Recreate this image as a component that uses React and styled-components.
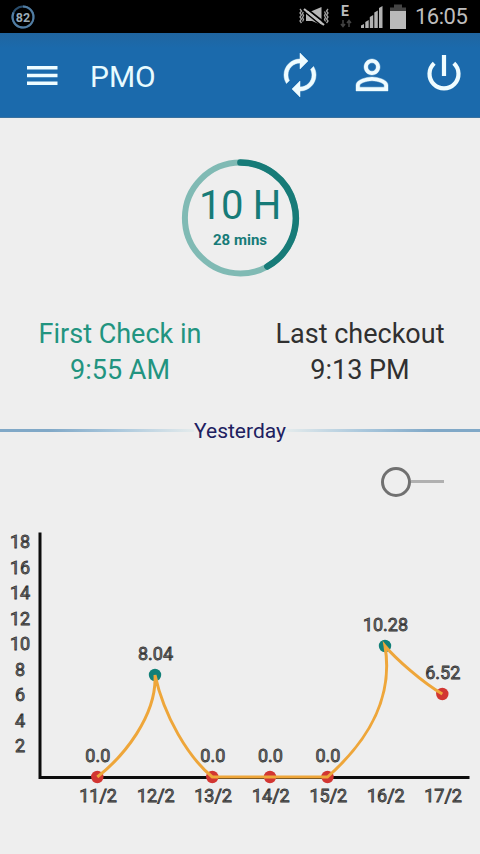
import React from 'react';
import styled, { createGlobalStyle } from 'styled-components';

const GlobalStyle = createGlobalStyle`
  body {
    margin: 0;
    background: #eeeeee;
    font-family: Roboto, 'Noto Sans', sans-serif;
  }
`;

const Screen = styled.div`
  display: flex;
  flex-direction: column;
  width: 480px;
  height: 854px;
  overflow: hidden;
  background: #eeeeee;
`;

const StatusBar = styled.div`
  display: flex;
  align-items: center;
  justify-content: space-between;
  box-sizing: border-box;
  height: 33px;
  padding: 0 12px 0 10px;
  background: #000;
`;

const StatusIcons = styled.div`
  display: flex;
  align-items: center;
`;

const Clock = styled.span`
  width: 53px;
  margin-left: 7px;
  color: #bebebe;
  font-size: 22px;
  line-height: 34px;
  letter-spacing: -0.5px;
  white-space: nowrap;
`;

const AppBar = styled.header`
  display: flex;
  align-items: center;
  box-sizing: border-box;
  height: 85px;
  padding: 0 12px 0 18px;
  background: linear-gradient(#2065a0, #1b6aac 18%, #1b6aac);
  border-bottom: 1px solid #39719f;
`;

const IconButton = styled.button`
  display: flex;
  width: 48px;
  height: 48px;
  margin: 0 0 0 ${(props) => props.$gap || 0}px;
  padding: 0;
  border: 0;
  background: none;
  color: #effcff;
`;

const Title = styled.h1`
  flex: 1;
  margin: 4px 0 0 24px;
  color: #e8fbff;
  font-size: 30px;
  font-weight: 400;
  line-height: 36px;
`;

const Summary = styled.section`
  display: flex;
  justify-content: center;
  height: 197px;
`;

const Dial = styled.div`
  display: grid;
  width: 120px;
  height: 120px;
  margin-top: 40px;

  > * {
    grid-area: 1 / 1;
  }
`;

const DialText = styled.div`
  display: flex;
  flex-direction: column;
  align-items: center;
  padding-top: 24px;
  color: #177b78;
`;

const Hours = styled.span`
  font-size: 40px;
  line-height: 47px;
  letter-spacing: -0.3px;
  white-space: nowrap;
`;

const Minutes = styled.span`
  margin-top: 2px;
  font-size: 15px;
  font-weight: 700;
  line-height: 18px;
`;

const Times = styled.section`
  display: grid;
  grid-template-columns: 1fr 1fr;
  height: 102px;
  padding-top: 1px;
`;

const TimeBlock = styled.div`
  color: ${(props) => props.$color};
  font-size: 27px;
  line-height: 36px;
  text-align: center;
`;

const Divider = styled.div`
  display: flex;
  align-items: center;
  height: 26px;
`;

const Line = styled.div`
  flex: 1;
  height: 3px;
  margin-bottom: 1px;
  background: linear-gradient(to ${(props) => props.$fade}, #80a8c7 25%, #a9c7dc 60%, #e4ebec);
`;

const DividerLabel = styled.span`
  color: #20205f;
  font-size: 21px;
  line-height: 26px;
`;

const ToggleRow = styled.div`
  display: flex;
  justify-content: flex-end;
  align-items: center;
  box-sizing: border-box;
  height: 76px;
  padding: 0 36px 1px 0;
`;

const Toggle = styled.div`
  display: flex;
  align-items: center;
`;

const Knob = styled.div`
  box-sizing: border-box;
  width: 30px;
  height: 30px;
  border: 3px solid #707070;
  border-radius: 50%;
`;

const Track = styled.div`
  width: 33px;
  height: 3px;
  background: #b0b0b0;
`;

const ChartSvg = styled.svg`
  display: block;

  text {
    font-family: Roboto, sans-serif;
    font-size: 18px;
    text-anchor: middle;
    fill: #777;
    stroke: #333;
    stroke-width: 0.8px;
  }
`;

const yLabels = [18, 16, 14, 12, 10, 8, 6, 4, 2];

const days = [
  { date: '11/2', value: '0.0', x: 97.3, y: 257 },
  { date: '12/2', value: '8.04', x: 155, y: 155 },
  { date: '13/2', value: '0.0', x: 212.3, y: 257 },
  { date: '14/2', value: '0.0', x: 270, y: 257 },
  { date: '15/2', value: '0.0', x: 327.5, y: 257 },
  { date: '16/2', value: '10.28', x: 385, y: 126 },
  { date: '17/2', value: '6.52', x: 442.3, y: 174 },
];

const BatteryBadge = () => (
  <svg width="26" height="33" viewBox="0 0 26 33">
    <circle cx="13" cy="17" r="10.5" fill="none" stroke="#294d6d" strokeWidth="2" />
    <path d="M13 6.500a10.500 10.500 0 1 1-9.500 6" fill="none" stroke="#527da2" strokeWidth="2" />
    <text x="13" y="21.500" textAnchor="middle" fontFamily="Roboto" fontSize="12.500" fontWeight="700" fill="#9aabb8">
      82
    </text>
  </svg>
);

// vibrate/mute, data, signal and battery
const SystemIcons = () => (
  <svg width="112" height="33" viewBox="296 0 112 33">
    <path
      d="M300 9l1.500 2-1.500 2 1.500 2-1.500 2 1.500 2-1.500 2 1.500 2M303.500 11.500l-1 2 1 2-1 2 1 2-1 2M324.500 11.500l1 2-1 2 1 2-1 2 1 2M328 9l-1.500 2 1.500 2-1.500 2 1.500 2-1.500 2 1.500 2-1.500 2"
      fill="none"
      stroke="#a5a5a5"
      strokeWidth="1.300"
    />
    <path d="M306 11h6l9.500-4v18l-9.500-4h-6z" fill="#b7b7b7" />
    <path d="M304 6.500l21 16.500M303 10.500l20 16.500" stroke="#000" strokeWidth="1.600" />
    <path d="M304 9l20 16" stroke="#c0c0c0" strokeWidth="2.200" />
    <text x="345" y="16" textAnchor="middle" fontFamily="Roboto" fontSize="14" fontWeight="700" fill="#bcbcbc">E</text>
    <path d="M343 20v6m-2-2l2 2.500 2-2.500M349 27v-6m-2 2l2-2.500 2 2.500" fill="none" stroke="#444" strokeWidth="1.500" />
    <g fill="#b2b2b2">
      <path d="M361 25.500l3-1.500v4h-3z" />
      <path d="M365.300 22l3.400-2v8h-3.400z" />
      <path d="M369.800 17l3.400-2v13h-3.400z" />
      <path d="M374.300 12.500l3.500-2V28h-3.500z" />
      <path d="M379 8l3.500-2v22H379z" />
    </g>
    <path d="M394 4.500h8v3h4v4h-16v-4h4z" fill="#444" />
    <rect x="390" y="11" width="16" height="18" fill="#bababa" />
  </svg>
);

const MenuIcon = () => (
  <svg width="48" height="48" viewBox="0 0 48 48">
    <path d="M9 16.700h30.500M9 24.500h30.500M9 32.300h30.500" stroke="currentColor" strokeWidth="3.600" />
  </svg>
);

const SyncIcon = () => (
  <svg width="48" height="48" viewBox="0 0 24 24">
    <path
      fill="currentColor"
      stroke="currentColor"
      strokeWidth="0.250"
      d="M12 6v3l4-4-4-4v3c-4.420 0-8 3.580-8 8 0 1.570.46 3.030 1.240 4.260L6.700 14.800c-.45-.83-.7-1.790-.7-2.800 0-3.310 2.690-6 6-6zm6.760 1.740L17.300 9.200c.44.84.7 1.790.7 2.800 0 3.310-2.690 6-6 6v-3l-4 4 4 4v-3c4.420 0 8-3.580 8-8 0-1.570-.46-3.030-1.240-4.260z"
    />
  </svg>
);

const PersonIcon = () => (
  <svg width="48" height="48" viewBox="0 0 24 24">
    <path
      fill="currentColor"
      stroke="currentColor"
      strokeWidth="0.200"
      d="M12 5.900a2.100 2.100 0 1 1 0 4.200 2.100 2.100 0 0 1 0-4.200m0 9c2.970 0 6.100 1.460 6.100 2.100v1.100H5.900V17c0-.64 3.130-2.100 6.100-2.100M12 4C9.790 4 8 5.790 8 8s1.790 4 4 4 4-1.790 4-4-1.790-4-4-4zm0 9c-2.670 0-8 1.340-8 4v3h16v-3c0-2.660-5.330-4-8-4z"
    />
  </svg>
);

const PowerIcon = () => (
  <svg width="48" height="48" viewBox="0 0 48 48">
    <path d="M24 4v21M14.200 12.200a14.500 14.500 0 1 0 19.600 0" fill="none" stroke="currentColor" strokeWidth="4.200" />
  </svg>
);

function WorkDial() {
  return (
    <Dial>
      <svg width="120" height="120" viewBox="0 0 120 120">
        <circle cx="60.400" cy="60" r="55.500" fill="none" stroke="#80bab4" strokeWidth="6" />
        <path d="M60.400 4.500a55.500 55.500 0 0 1 26.900 104" fill="none" stroke="#177b78" strokeWidth="6.500" strokeLinecap="round" />
      </svg>
      <DialText>
        <Hours>10 H</Hours>
        <Minutes>28 mins</Minutes>
      </DialText>
    </Dial>
  );
}

function HoursChart() {
  return (
    <ChartSvg width="480" height="334" viewBox="0 0 480 334">
      <path d="M40 12.500v245h429.500" fill="none" stroke="#0c0c0c" strokeWidth="3" />
      {yLabels.map((label, i) => (
        <text key={label} x="20" y={28 + i * 25.5}>
          {label}
        </text>
      ))}
      {days.map((day) => (
        <circle key={day.date} cx={day.x} cy={day.y} r="6.200" fill={day.value > 8 ? '#128078' : '#d23632'} />
      ))}
      <path
        d="M97.300 257C123 237 157 196 155 155C164 196 188 237 212.300 257H327.500C350 237 396 192 385 126C396 139 422 162 442.300 174"
        fill="none"
        stroke="#eea63a"
        strokeWidth="3"
      />
      {days.map((day) => (
        <g key={day.date}>
          <text x={day.x + 0.5} y={day.y - 15}>
            {day.value}
          </text>
          <text x={day.x + 0.8} y="282">
            {day.date}
          </text>
        </g>
      ))}
    </ChartSvg>
  );
}

function App() {
  return (
    <Screen>
      <GlobalStyle />
      <StatusBar>
        <BatteryBadge />
        <StatusIcons>
          <SystemIcons />
          <Clock>16:05</Clock>
        </StatusIcons>
      </StatusBar>
      <AppBar>
        <IconButton>
          <MenuIcon />
        </IconButton>
        <Title>PMO</Title>
        <IconButton>
          <SyncIcon />
        </IconButton>
        <IconButton $gap={24}>
          <PersonIcon />
        </IconButton>
        <IconButton $gap={24}>
          <PowerIcon />
        </IconButton>
      </AppBar>
      <Summary>
        <WorkDial />
      </Summary>
      <Times>
        <TimeBlock $color="#229480">
          First Check in
          <br />
          9:55 AM
        </TimeBlock>
        <TimeBlock $color="#303030">
          Last checkout
          <br />
          9:13 PM
        </TimeBlock>
      </Times>
      <Divider>
        <Line $fade="right" />
        <DividerLabel>Yesterday</DividerLabel>
        <Line $fade="left" />
      </Divider>
      <ToggleRow>
        <Toggle>
          <Knob />
          <Track />
        </Toggle>
      </ToggleRow>
      <HoursChart />
    </Screen>
  );
}

export default App;
